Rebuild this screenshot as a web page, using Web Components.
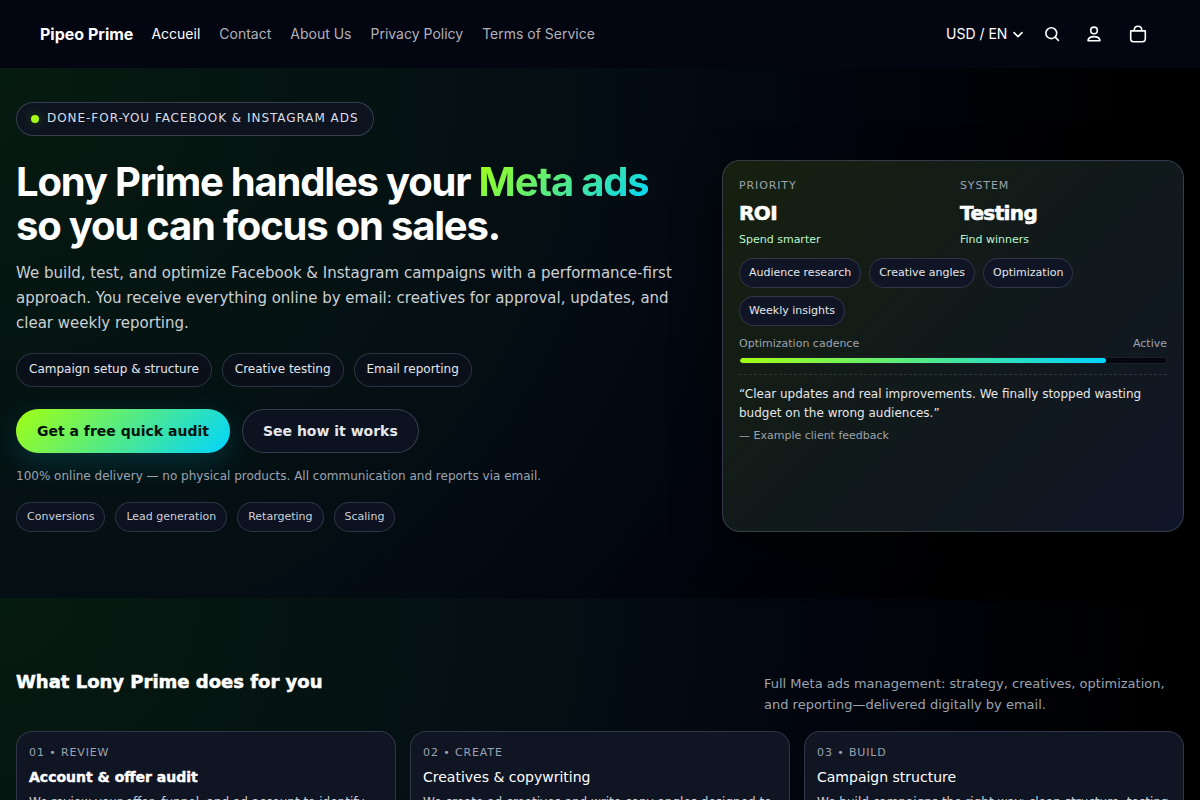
<!DOCTYPE html>
<html lang="en">
<head>
<meta charset="utf-8">
<meta name="viewport" content="width=device-width, initial-scale=1">
<title>Pipeo Prime</title>
<style>
  html { background: #000; }
  body { margin: 0; color: #fff; font-family: "DejaVu Sans", sans-serif; font-size: 14px; }
</style>
</head>
<body>
<site-header></site-header>
<main>
  <hero-section></hero-section>
  <services-section></services-section>
</main>

<script>
const define = (name, markup) => {
  const template = document.createElement('template');
  template.innerHTML = markup;
  customElements.define(name, class extends HTMLElement {
    constructor() {
      super();
      this.attachShadow({ mode: 'open' }).append(template.content.cloneNode(true));
    }
  });
};

define('tag-chip', `
  <style>
    :host { display: inline-flex; align-items: center; box-sizing: border-box; height: 30px; padding: 0 10px;
      border: 1px solid rgba(148,163,184,.24); border-radius: 15px; background: #0d1220; color: #cbd1da;
      font-size: 11px; line-height: 16px; white-space: nowrap; }
    :host([size="large"]) { height: 34px; padding: 0 12px 2px; border-radius: 17px; font-size: 12px;
      background: #0a101a; color: #e5e7eb; }
    :host([size="compact"]) { padding: 0 9px; background: #0f1524; color: #e5e7eb; }
  </style><slot></slot>`);

define('site-header', `
  <style>
    :host { display: block; background: #030511; font-family: Inter, sans-serif; font-size: 14px; }
    header { display: flex; align-items: center; min-height: 68px; padding: 0 40px; }
    a { color: inherit; text-decoration: none; }
    .brand { font-size: 16px; font-weight: 700; line-height: 20px; }
    nav { display: flex; gap: 19px; margin-left: 18px; color: #b1b2b8; line-height: 20px; }
    nav a[aria-current] { color: #fff; }
    .tools { display: flex; align-items: center; margin-left: auto; }
    .locale { display: grid; align-items: center; }
    .locale > * { grid-area: 1 / 1; }
    select { appearance: none; border: 0; margin: 0; padding: 0 20px 0 0; background: transparent; color: #fff;
      font: inherit; line-height: 20px; }
    .locale svg { justify-self: end; pointer-events: none; }
    button { display: grid; place-items: center; width: 44px; height: 44px; padding: 0; border: 0;
      background: none; color: #fff; }
    svg { fill: none; stroke: currentColor; stroke-width: 1.6; stroke-linecap: round; stroke-linejoin: round; }
  </style>
  <header>
    <a class="brand" href="#">Pipeo Prime</a>
    <nav aria-label="Main">
      <a href="#" aria-current="page">Accueil</a><a href="#">Contact</a><a href="#">About Us</a>
      <a href="#">Privacy Policy</a><a href="#">Terms of Service</a>
    </nav>
    <div class="tools">
      <div class="locale">
        <select aria-label="Currency and language"><option>USD / EN</option></select>
        <svg width="20" height="20" viewBox="0 0 20 20"><path d="M6 8.600 10 12.600 14 8.600"/></svg>
      </div>
      <button aria-label="Search"><svg width="24" height="24" viewBox="0 0 24 24"><circle cx="13.3" cy="11.2" r="5.400"/><path d="m17.2 15.100 3.200 3.300"/></svg></button>
      <button aria-label="Account"><svg width="24" height="24" viewBox="0 0 24 24"><circle cx="12" cy="8.400" r="3.300"/><path d="M6.400 18.800c-.3 0-.5-.3-.4-.6.6-2.200 3.100-3.600 6-3.600s5.400 1.400 6 3.600c.1.3-.1.6-.4.6Z"/></svg></button>
      <button aria-label="Cart"><svg width="24" height="24" viewBox="0 0 24 24"><path d="M4.700 8.900h14.600v8.200a2.600 2.600 0 0 1-2.600 2.600H7.300a2.600 2.600 0 0 1-2.600-2.600Z"/><path d="M8.200 8.600c0-2.700 1.500-4.300 3.800-4.300s3.800 1.600 3.800 4.300"/></svg></button>
    </div>
  </header>`);

define('metric-item', `
  <style>
    :host { display: grid; padding-top: 1px; }
    slot { display: block; }
    .label { font-size: 11px; line-height: 16px; letter-spacing: .08em; text-transform: uppercase; color: #9ca3af; }
    .value { margin-top: 7px; font-size: 20px; font-weight: 900; -webkit-text-stroke: .03em currentColor;
      letter-spacing: -.03em; line-height: 24px; color: #fff; }
    .note { margin-top: 7px; font-size: 11px; line-height: 16px; color: #bbf7d0; }
  </style>
  <slot class="label" name="label"></slot>
  <slot class="value" name="value"></slot>
  <slot class="note"></slot>`);

define('insight-card', `
  <style>
    :host { display: block; box-sizing: border-box; padding: 16px; border: 1px solid rgba(148,163,184,.26);
      border-radius: 18px; background: linear-gradient(135deg, #16200f 0%, #111a1a 50%, #101628 100%);
      box-shadow: 0 18px 45px rgba(0,0,0,.6); }
    .metrics { display: grid; grid-template-columns: 1fr 1fr; gap: 14px; }
    .chips { display: flex; flex-wrap: wrap; gap: 8px; margin-top: 10px; }
    .cadence { display: flex; justify-content: space-between; margin-top: 10px; font-size: 11px; line-height: 16px; color: #9ca3af; }
    .bar { box-sizing: border-box; height: 7px; margin-top: 5px; border: 1px solid rgba(148,163,184,.16); border-radius: 4px;
      background: #05070e; overflow: hidden; }
    .bar div { width: 86%; height: 100%; border-radius: 4px; background: linear-gradient(90deg, #a3ff12, #00d4ff); }
    figure { margin: 10px 0 0; padding-top: 10px; border-top: 1px dashed rgba(148,163,184,.2); }
    blockquote { margin: 0; font-size: 12px; line-height: 19px; color: #e5e7eb; }
    figcaption { margin-top: 5px; font-size: 11px; line-height: 16px; color: #9ca3af; }
  </style>
  <div class="metrics">
    <metric-item><span slot="label">Priority</span><span slot="value">ROI</span>Spend smarter</metric-item>
    <metric-item><span slot="label">System</span><span slot="value">Testing</span>Find winners</metric-item>
  </div>
  <div class="chips">
    <tag-chip size="compact">Audience research</tag-chip><tag-chip size="compact">Creative angles</tag-chip>
    <tag-chip size="compact">Optimization</tag-chip><tag-chip size="compact">Weekly insights</tag-chip>
  </div>
  <div class="cadence"><span>Optimization cadence</span><span>Active</span></div>
  <div class="bar"><div></div></div>
  <figure>
    <blockquote>“Clear updates and real improvements. We finally stopped wasting budget on the wrong audiences.”</blockquote>
    <figcaption>— Example client feedback</figcaption>
  </figure>`);

define('hero-section', `
  <style>
    :host { display: block; box-sizing: border-box; padding: 34px 16px 66px;
      background: radial-gradient(circle at top left, #061b10 0%, #040d13 46%, #02050e 62%, #000 86%); }
    .eyebrow { display: inline-flex; align-items: center; gap: 8px; box-sizing: border-box; height: 34px; padding: 0 14px;
      border: 1px solid rgba(148,163,184,.3); border-radius: 17px; background: #0d1420; vertical-align: top; }
    .eyebrow i { width: 8px; height: 8px; border-radius: 50%; background: #a3ff12; box-shadow: 0 0 12px rgba(163,255,18,.3); }
    .eyebrow span { padding-bottom: 2px; font-size: 12px; line-height: 16px; letter-spacing: .08em; color: #d9dee6; text-transform: uppercase; }
    .columns { display: grid; grid-template-columns: minmax(0, 16fr) minmax(0, 11fr); gap: 34px; margin-top: 24px; }
    h1 { margin: 0; font: 700 40px/44px Inter, sans-serif; letter-spacing: -.03em; color: #fff; }
    h1 span { background: linear-gradient(135deg, #a3ff12, #00d4ff); background-clip: text; -webkit-background-clip: text; color: transparent; }
    .lead { margin: 13px 0 0; font-size: 15px; line-height: 25px; color: #cbd0d4; }
    .row { display: flex; flex-wrap: wrap; gap: 10px; margin-top: 17px; }
    .actions { display: flex; flex-wrap: wrap; gap: 12px; margin-top: 22px; }
    button { height: 44px; padding: 0 20px; border: 1px solid rgba(148,163,184,.3); border-radius: 22px;
      background: #0d1220; color: #e5e7eb; font: 700 14px/20px "DejaVu Sans", sans-serif; }
    .primary { border: 0; padding: 0 21px; background: linear-gradient(135deg, #a3ff12, #00d4ff); color: #03130b;
      box-shadow: 0 10px 30px rgba(0,212,255,.16); }
    .note { margin: 14px 0 0; font-size: 12px; line-height: 18px; color: #9ca3af; }
  </style>
  <div class="eyebrow"><i></i><span>Done-for-you Facebook &amp; Instagram ads</span></div>
  <div class="columns">
    <div>
      <h1>Lony Prime handles your <span>Meta ads</span><br>so you can focus on sales.</h1>
      <p class="lead">We build, test, and optimize Facebook &amp; Instagram campaigns with a performance-first approach. You receive everything online by email: creatives for approval, updates, and clear weekly reporting.</p>
      <div class="row">
        <tag-chip size="large">Campaign setup &amp; structure</tag-chip><tag-chip size="large">Creative testing</tag-chip><tag-chip size="large">Email reporting</tag-chip>
      </div>
      <div class="actions"><button class="primary">Get a free quick audit</button><button>See how it works</button></div>
      <p class="note">100% online delivery — no physical products. All communication and reports via email.</p>
      <div class="row">
        <tag-chip>Conversions</tag-chip><tag-chip>Lead generation</tag-chip><tag-chip>Retargeting</tag-chip><tag-chip>Scaling</tag-chip>
      </div>
    </div>
    <insight-card></insight-card>
  </div>`);

define('service-card', `
  <style>
    :host { display: block; box-sizing: border-box; padding: 13px 12px; border: 1px solid rgba(148,163,184,.24);
      border-radius: 16px; background: #101524; }
    .step { display: block; font-size: 11px; line-height: 16px; letter-spacing: .08em; text-transform: uppercase; color: #9ca3af; }
    h3 { margin: 6px 0 0; font-size: 14px; font-weight: 400; line-height: 20px; color: #fff; }
    :host([featured]) h3 { font-weight: 900; -webkit-text-stroke: .03em currentColor; }
    p { margin: 5px 0 0; font-size: 12px; line-height: 20px; color: #cbd0d8; }
  </style>
  <slot class="step" name="step"></slot>
  <h3><slot name="title"></slot></h3>
  <p><slot></slot></p>`);

define('services-section', `
  <style>
    :host { display: block; padding: 75px 16px 64px;
      background: radial-gradient(ellipse 110% 400% at top left, #061b10 0%, #040d13 46%, #02050e 62%, #000 88%); }
    .head { display: flex; justify-content: space-between; align-items: flex-start; gap: 24px; }
    h2 { margin: 0; font-size: 18px; font-weight: 900; -webkit-text-stroke: .03em currentColor; line-height: 18px; color: #fff; }
    .head p { flex: 0 1 420px; margin: 0; font-size: 13px; line-height: 21px; color: #9ca3af; }
    .cards { display: grid; grid-template-columns: repeat(3, minmax(0, 1fr)); gap: 14px; margin-top: 16px; }
  </style>
  <div class="head">
    <h2>What Lony Prime does for you</h2>
    <p>Full Meta ads management: strategy, creatives, optimization, and reporting—delivered digitally by email.</p>
  </div>
  <div class="cards">
    <service-card featured><span slot="step">01 • Review</span><span slot="title">Account &amp; offer audit</span>We review your offer, funnel, and ad account to identify</service-card>
    <service-card><span slot="step">02 • Create</span><span slot="title">Creatives &amp; copywriting</span>We create ad creatives and write copy angles designed to</service-card>
    <service-card><span slot="step">03 • Build</span><span slot="title">Campaign structure</span>We build campaigns the right way: clean structure, testing</service-card>
  </div>`);
</script>
</body>
</html>
